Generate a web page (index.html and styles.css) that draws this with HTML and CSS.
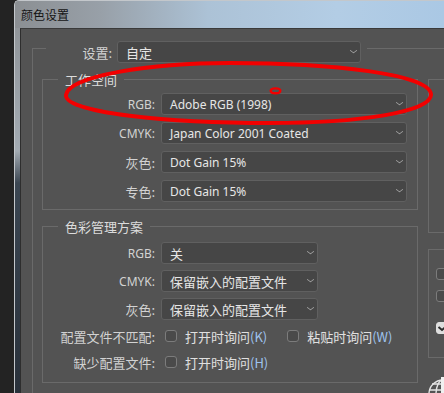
FILE: index.html
```html
<!DOCTYPE html>
<html lang="zh-CN">
<head>
    <meta charset="UTF-8">
    <meta name="viewport" content="width=device-width, initial-scale=1.0">
    <title>颜色设置</title>
    <link rel="stylesheet" href="styles.css">
</head>
<body>
    <div class="desk"></div>

    <div class="window">
        <div class="titlebar">颜色设置</div>

        <div class="client">
            <div class="outer">
                <div class="outer-head">
                    <span class="lbl zh lbl-set">设置:</span>
                    <div class="select w-set"><span class="zh">自定</span><i class="chev"></i></div>
                </div>

                <div class="columns">
                    <div class="col-left">
                        <div class="group g-work">
                            <div class="legend zh">工作空间</div>
                            <div class="rows">
                                <div class="row"><span class="lbl">RGB:</span><div class="select w-wide"><span>Adobe RGB (1998)</span><i class="chev"></i></div></div>
                                <div class="row"><span class="lbl">CMYK:</span><div class="select w-wide"><span>Japan Color 2001 Coated</span><i class="chev"></i></div></div>
                                <div class="row"><span class="lbl zh">灰色:</span><div class="select w-wide"><span>Dot Gain 15%</span><i class="chev"></i></div></div>
                                <div class="row"><span class="lbl zh">专色:</span><div class="select w-wide"><span>Dot Gain 15%</span><i class="chev"></i></div></div>
                            </div>
                        </div>

                        <div class="group g-policy">
                            <div class="legend zh">色彩管理方案</div>
                            <div class="rows">
                                <div class="row"><span class="lbl">RGB:</span><div class="select w-short"><span class="zh">关</span><i class="chev"></i></div></div>
                                <div class="row"><span class="lbl">CMYK:</span><div class="select w-short"><span class="zh">保留嵌入的配置文件</span><i class="chev"></i></div></div>
                                <div class="row"><span class="lbl zh">灰色:</span><div class="select w-short"><span class="zh">保留嵌入的配置文件</span><i class="chev"></i></div></div>
                                <div class="row check-row">
                                    <span class="lbl zh">配置文件不匹配:</span>
                                    <span class="box"></span><span class="opt zh">打开时询问<em>(K)</em></span>
                                    <span class="box box-gap"></span><span class="opt zh">粘贴时询问<em>(W)</em></span>
                                </div>
                                <div class="row check-row">
                                    <span class="lbl zh">缺少配置文件:</span>
                                    <span class="box"></span><span class="opt zh">打开时询问<em>(H)</em></span>
                                </div>
                            </div>
                        </div>
                    </div>

                    <div class="col-right">
                        <div class="group side-a"></div>
                        <div class="group side-b">
                            <span class="box side-box"></span>
                            <span class="box side-box second"></span>
                            <span class="box side-box third checked">
                                <svg width="10" height="8" viewBox="0 0 10 8"><polyline points="1.5,3 5,6 8.5,3" fill="none" stroke="#2a2a2a" stroke-width="2"/></svg>
                            </span>
                        </div>
                        <svg class="globe" width="22" height="20" viewBox="0 0 22 20">
                            <g fill="none" stroke="#e4e4e4" stroke-width="1.4">
                                <circle cx="16" cy="17" r="14"/>
                                <ellipse cx="16" cy="17" rx="7" ry="14"/>
                                <line x1="2" y1="13" x2="30" y2="13"/>
                                <line x1="5" y1="7" x2="27" y2="7"/>
                            </g>
                            <rect x="14" y="0" width="3" height="20" fill="#f0f0f0"/>
                        </svg>
                    </div>
                </div>
            </div>
        </div>
    </div>

    <svg class="mark" width="444" height="393" viewBox="0 0 444 393">
        <path d="M66,95 C68,76 150,63 230,63 C330,63 432,74 431,95 C430,112 360,123 270,123 C170,123 64,113 66,95 Z"
              fill="none" stroke="#f20000" stroke-width="4"/>
        <ellipse cx="275.5" cy="90.8" rx="4.8" ry="2.4" fill="none" stroke="#f20000" stroke-width="2.4"/>
    </svg>
</body>
</html>
```

FILE: styles.css
```css
body {
    margin: 0;
    height: 393px;
    overflow: hidden;
    display: flex;
    background-color: #232323;
    font-family: "Noto Sans", "Noto Sans CJK SC", sans-serif;
    font-size: 12px;
    color: #d4d4d4;
}
.desk {
    width: 14px;
    flex: none;
}
.window {
    flex: 1;
    display: flex;
    flex-direction: column;
    border-top: 1px solid #c3c7cb;
    border-left: 1px solid #c3c7cb;
    border-top-left-radius: 5px;
    background: linear-gradient(to bottom, #8d9195 0, #a3abb3 150px, #3b4652 182px, #29313b 100%);
    overflow: hidden;
}
.titlebar {
    height: 27px;
    padding-left: 6px;
    line-height: 27px;
    font-family: "Noto Sans CJK SC", sans-serif;
    font-size: 12px;
    color: #141414;
    background: linear-gradient(to right, #8b8f93 0, #98a0a8 20%, #acc2d6 45%, #b3cde5 75%, #aac8e4 100%);
}
.client {
    flex: 1;
    margin-left: 5px;
    border-top: 1px solid #3a3a3a;
    border-left: 1px solid #2e2e2e;
    background-color: #535353;
    padding: 19px 0 0 11px;
}
.zh {
    font-family: "Noto Sans CJK SC", sans-serif;
    font-size: 13px;
}
.outer {
    border-top: 1px solid #6a6a6a;
    border-left: 1px solid #6a6a6a;
    height: 400px;
}
.outer-head {
    display: flex;
    align-items: center;
    gap: 5px;
    width: fit-content;
    margin: -8px 0 0 13px;
    padding-right: 6px;
    background-color: #535353;
}
.lbl {
    text-align: right;
    color: #d2d2d2;
    white-space: nowrap;
}
.lbl-set {
    width: 66px;
}
.select {
    height: 22px;
    box-sizing: border-box;
    display: flex;
    align-items: center;
    justify-content: space-between;
    padding: 0 3px 0 8px;
    border: 1px solid #606060;
    border-radius: 3px;
    background-color: #464646;
    color: #e6e6e6;
    white-space: nowrap;
}
.w-set {
    width: 244px;
}
.w-wide {
    width: 246px;
}
.w-short {
    width: 157px;
}
.chev {
    width: 7px;
    height: 7px;
    box-sizing: border-box;
    border-right: 1.3px solid #a9a9a9;
    border-bottom: 1.3px solid #a9a9a9;
    transform: scale(0.75, 0.55) rotate(45deg);
    margin-top: -3px;
}
.columns {
    display: flex;
    gap: 10px;
    margin: 16px 0 0 9px;
}
.col-left {
    width: 376px;
    flex: none;
}
.group {
    border: 1px solid #6a6a6a;
}
.legend {
    width: fit-content;
    margin: -9px 0 0 15px;
    padding: 0 7px;
    line-height: 17px;
    background-color: #535353;
    color: #dcdcdc;
}
.rows {
    display: flex;
    flex-direction: column;
}
.g-work .rows {
    gap: 7px;
    margin-top: 5px;
    padding-bottom: 7px;
}
.g-policy {
    margin-top: 16px;
}
.g-policy .rows {
    gap: 6px;
    margin-top: 7px;
    padding-bottom: 10px;
}
.row {
    display: flex;
    align-items: center;
    gap: 6px;
}
.row .lbl {
    width: 112px;
    flex: none;
}
.check-row {
    height: 20px;
    gap: 0;
}
.check-row .lbl {
    margin-right: 6px;
}
.box {
    width: 12px;
    height: 12px;
    box-sizing: border-box;
    border: 1px solid #7c7c7c;
    border-radius: 3px;
    background-color: #4a4a4a;
    margin-left: 4px;
    flex: none;
}
.box-gap {
    margin-left: 20px;
}
.opt {
    margin-left: 8px;
    color: #e0e0e0;
    white-space: nowrap;
}
.opt em {
    font-style: normal;
    color: #9fc3ee;
}
.col-right {
    width: 60px;
    flex: none;
}
.side-a {
    height: 152px;
}
.side-b {
    margin-top: 16px;
    height: 107px;
    display: flex;
    flex-direction: column;
    padding-left: 7px;
}
.side-box {
    margin-left: 0;
    margin-top: 18px;
}
.side-box.second {
    margin-top: 10px;
}
.side-box.third {
    margin-top: 20px;
}
.checked {
    display: flex;
    align-items: center;
    justify-content: center;
    background-color: #dedede;
    border-color: #dedede;
}
.globe {
    display: block;
    margin: 19px 0 0 -1px;
}
.mark {
    position: absolute;
    left: 0;
    top: 0;
    pointer-events: none;
}
```
